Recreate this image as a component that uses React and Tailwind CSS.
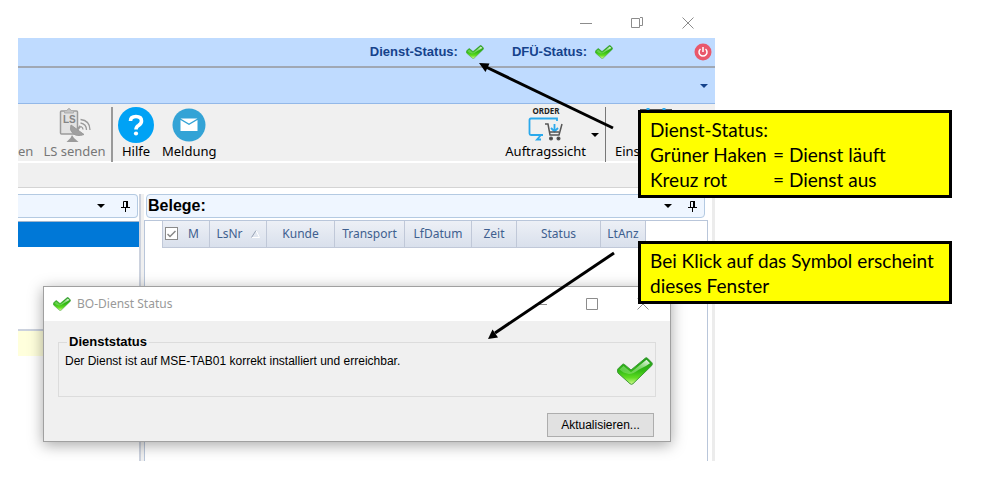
import { useId } from "react";

const columns = [
  { name: "Kunde", width: "w-[68px]" },
  { name: "Transport", width: "w-[70px]" },
  { name: "LfDatum", width: "w-[67px]" },
  { name: "Zeit", width: "w-[45px]" },
  { name: "Status", width: "w-[84px]" },
  { name: "LtAnz", width: "w-[45px]" },
];

function CheckIcon({ className }) {
  const id = useId();
  return (
    <svg viewBox="0 0 36 28" className={className} aria-hidden="true">
      <defs>
        <linearGradient id={id + "a"} x1="0" y1="0" x2="0" y2="1">
          <stop offset="0" stopColor="#1f9a1a" />
          <stop offset="0.5" stopColor="#33bb14" />
          <stop offset="0.75" stopColor="#5fdc22" />
          <stop offset="1" stopColor="#d4fa90" />
        </linearGradient>
        <linearGradient id={id + "b"} x1="1" y1="0" x2="0.3" y2="0.9">
          <stop offset="0" stopColor="#ffffff" stopOpacity="0.95" />
          <stop offset="0.5" stopColor="#e4ffd8" stopOpacity="0.5" />
          <stop offset="1" stopColor="#d0ffc0" stopOpacity="0.3" />
        </linearGradient>
      </defs>
      <path
        d="M.8 12 5.500 7.300Q6.500 6.600 7.500 7.500L14 13 28.500 1Q29.500 .3 30.500 1.200L35 5.800Q35.700 7 34.800 8.500L16 26.700Q14.500 28 13 26.700L1 16Q0 14 .8 12Z"
        fill={"url(#" + id + "a)"}
        stroke="#3f9a38"
        strokeWidth="1"
      />
      <path
        d="M2.500 12.500 6.500 9 14 15.300 29.500 2.800 33 6.200Q29 9.500 22 12.500 16 17 12 17 6 16 2.500 12.500Z"
        fill={"url(#" + id + "b)"}
      />
    </svg>
  );
}

function WindowButtons({ restore }) {
  return (
    <div className="flex pr-[2px] text-[#8c8c8c]">
      <button type="button" aria-label="Minimieren" className="flex h-8 w-[51px] items-center justify-center">
        <svg width="12" height="12" viewBox="0 0 12 12" stroke="currentColor">
          <path d="M0 6.500H12" />
        </svg>
      </button>
      <button type="button" aria-label="Maximieren" className="flex h-8 w-[51px] items-center justify-center">
        <svg width="12" height="12" viewBox="0 0 12 12" fill="none" stroke="currentColor">
          {restore ? <path d="M.5 1.500H8.500V10.500H.5ZM9 .5H11.500V8.500H9" /> : <path d="M.5 .5H11.500V11.500H.5Z" />}
        </svg>
      </button>
      <button type="button" aria-label="Schließen" className="flex h-8 w-[51px] items-center justify-center">
        <svg width="12" height="12" viewBox="0 0 12 12" stroke="currentColor">
          <path d="M.5 .5 11.500 11.500M11.500 .5 .5 11.500" />
        </svg>
      </button>
    </div>
  );
}

function Caret() {
  return (
    <svg width="8" height="4" viewBox="0 0 8 4" aria-hidden="true">
      <path d="M0 0H8L4 4Z" fill="currentColor" />
    </svg>
  );
}

function PanelTools() {
  return (
    <div className="flex items-center gap-4">
      <button type="button" aria-label="Menü">
        <Caret />
      </button>
      <button type="button" aria-label="Anheften">
        <svg width="9" height="11" viewBox="0 0 9 11" fill="none" stroke="currentColor" aria-hidden="true">
          <path d="M2.500 6V.5H6.500V6M0 6.500H9M4.500 7V11" />
          <path d="M6 0V6" strokeWidth="2" />
        </svg>
      </button>
    </div>
  );
}

function ToolButton({ label, children }) {
  return (
    <button type="button" className="flex shrink-0 flex-col items-center">
      <span className="flex h-9 items-center justify-center">{children}</span>
      <span className="text-[13px] leading-4">{label}</span>
    </button>
  );
}

function SendIcon() {
  return (
    <svg width="32" height="36" viewBox="0 0 32 36" fill="none" stroke="#9b9b9b" aria-hidden="true">
      <rect x="1.500" y="4" width="17" height="23" rx="1" fill="#e2e2e2" strokeWidth="1.500" />
      <path d="M5.500 6V3.500H8Q10 -.5 12 3.500H14.500V6Z" fill="#c4c4c4" stroke="#adadad" />
      <text x="4" y="16" fontSize="10" fontWeight="700" fill="#858585" stroke="none" fontFamily="Liberation Sans">
        LS
      </text>
      <path d="M12 18Q10 23 14 26.500 18 30 25 27.500Z" fill="#a0a0a0" />
      <path d="M18 23 21.500 19" strokeWidth="2" />
      <path d="M7.500 35 11.500 31 13 28 15 31 19.500 35Z" fill="#9b9b9b" stroke="none" />
      <path d="M22 19.500Q24 20.500 24 22.500M21.500 16Q27.500 17 27.500 23M21.500 12.500Q31 13.500 31 23" strokeWidth="1.300" />
    </svg>
  );
}

function MailIcon() {
  return (
    <svg width="34" height="34" viewBox="0 0 34 34" aria-hidden="true">
      <circle cx="17" cy="17" r="16.500" fill="#33a3d6" />
      <path d="M8.500 12 17 17 25.500 12V23H8.500Z" fill="#fff" />
      <path d="M8.500 10.500H25.500L17 15.500Z" fill="#fff" />
    </svg>
  );
}

function OrderIcon() {
  return (
    <svg width="36" height="36" viewBox="0 0 36 36" fill="none" overflow="visible" aria-hidden="true">
      <text x="18" y="7" fontSize="8" fontWeight="700" fill="#222" textAnchor="middle" fontFamily="Noto Sans">
        ORDER
      </text>
      <g stroke="#2ba9ec" strokeWidth="1.800">
        <path d="M29 14V11.500H3Q1.500 11.500 1.500 13V26.500Q1.500 28 3 28H15M13 28 9 32.500H13" />
        <path d="M26.500 17V24M23 21 26.500 24.500 30 21" />
      </g>
      <g stroke="#555" strokeWidth="1.500">
        <path d="M17 17H20L22 28H31L34 17M21 25H31" />
        <circle cx="23" cy="31.500" r="1.300" fill="#333" />
        <circle cx="30.500" cy="31.500" r="1.300" fill="#333" />
      </g>
    </svg>
  );
}

function SettingsIcon() {
  return (
    <svg width="34" height="36" viewBox="0 0 34 36" fill="none" strokeWidth="2" aria-hidden="true">
      <path d="M2 3H32V30H2Z" stroke="#555" />
      <path d="M9 1V6M25 1V6" stroke="#2ba9ec" strokeWidth="3" />
    </svg>
  );
}

function StatusDialog() {
  return (
    <section
      role="dialog"
      aria-label="BO-Dienst Status"
      className="absolute top-[286px] left-[25px] w-[628px] border border-[#a0a0a0] bg-[#f0f0f0] shadow-[0_3px_14px_rgba(0,0,0,0.35)]"
    >
      <header className="flex h-[34px] items-center bg-white pl-[9px]">
        <CheckIcon className="h-[14px] w-[18px]" />
        <h2 className="ml-1.5 flex-1 font-['Noto_Sans',sans-serif] text-xs text-[#999]">BO-Dienst Status</h2>
        <WindowButtons />
      </header>
      <div className="px-[14px] pt-[13px] pb-1">
        <fieldset className="flex h-[63px] justify-between border border-[#dcdcdc] pr-[2px] pl-1.5">
          <legend className="ml-0.5 px-0.5 text-[13px] leading-4 font-bold">Dienststatus</legend>
          <p className="text-xs leading-[22px]">Der Dienst ist auf MSE-TAB01 korrekt installiert und erreichbar.</p>
          <CheckIcon className="mt-[7px] h-7 w-9" />
        </fieldset>
        <div className="mt-4 flex justify-end pr-[2px]">
          <button type="button" className="h-6 w-[107px] border border-[#adadad] bg-[#e1e1e1] text-xs">
            Aktualisieren...
          </button>
        </div>
      </div>
    </section>
  );
}

export default function App() {
  return (
    <div className="relative bg-white pr-[282px] pl-[18px] font-['Liberation_Sans',Arial,sans-serif] text-black">
      <main className="relative">
        <div className="flex h-[39px] items-end justify-end">
          <WindowButtons restore />
        </div>

        <div className="-mt-px flex h-7 items-center justify-end bg-[#bfdbff] pr-[3px] text-[13px] font-bold text-[#15428b]">
          <span>Dienst-Status:</span>
          <CheckIcon className="ml-2 h-[14px] w-[18px]" />
          <span className="ml-7">DFÜ-Status:</span>
          <CheckIcon className="mr-[81px] ml-2 h-[14px] w-[18px]" />
          <button type="button" aria-label="Beenden">
            <svg width="18" height="18" viewBox="0 0 18 18" fill="none" stroke="#fff" strokeWidth="1.500">
              <circle cx="9" cy="9" r="8.500" fill="#e9586b" stroke="none" />
              <path d="M6.500 6A4 4 0 1 0 11.500 6M9 4V9" />
            </svg>
          </button>
        </div>
        <div className="flex h-[38px] items-center justify-end border-t-2 border-b border-t-[#a0a8b4] border-b-[#93b8e8] bg-[#bfdbff] pr-[7px] text-[#15428b]">
          <Caret />
        </div>

        <div className="flex h-[59px] border-b-2 border-white bg-[#f0f0f0] pt-[3px] font-['Noto_Sans',sans-serif]">
          <div className="flex w-[93px] shrink-0 gap-2.5 text-[#777]">
            <ToolButton label="en" />
            <ToolButton label="LS senden">
              <SendIcon />
            </ToolButton>
          </div>
          <div className="flex h-[55px] gap-2 border-l-2 border-[#999] pl-[5px]">
            <ToolButton label="Hilfe">
              <svg width="36" height="36" viewBox="0 0 36 36" aria-hidden="true">
                <circle cx="18" cy="18" r="18" fill="#00a2f5" />
                <path
                  d="M12.500 14Q12.500 9.500 18 9.500T23.500 14Q23.500 16.500 20.500 18.500 18 20 18 22.500"
                  fill="none"
                  stroke="#fff"
                  strokeWidth="3.600"
                />
                <circle cx="18" cy="26.500" r="2.100" fill="#fff" />
              </svg>
            </ToolButton>
            <ToolButton label="Meldung">
              <MailIcon />
            </ToolButton>
          </div>
          <div className="ml-auto flex h-[55px]">
            <ToolButton label="Auftragssicht">
              <OrderIcon />
            </ToolButton>
            <button type="button" aria-label="Weitere Sichten" className="flex w-[19px] items-center justify-center">
              <Caret />
            </button>
            <div className="border-l border-[#777] pr-[17px] pl-[9px]">
              <ToolButton label="Einstellungen">
                <SettingsIcon />
              </ToolButton>
            </div>
          </div>
        </div>
        <div className="h-[25px] border-b border-[#d4d4d4] bg-[#f0f0f0]" />

        <div className="mt-1.5 flex h-[267px]">
          <div className="w-[123px] shrink-0 border-r-2 border-[#ccd2de]">
            <div className="mr-px flex h-6 items-center justify-end rounded-r-sm border border-l-0 border-[#b4cae2] bg-[#eff6ff] pr-[7px]">
              <PanelTools />
            </div>
            <div className="mt-[3px] h-[26px] border-t border-[#9fb4cc] bg-[#0078d7]" />
            <div className="mt-[82px] h-[27px] border-t-2 border-[#ccd2de] bg-[#ffffdc]" />
          </div>
          <div className="w-[3px] shrink-0 bg-[#f0f0f0]" />
          <div className="flex min-w-0 flex-1 flex-col">
            <div className="mr-[7px] ml-[2px] flex h-6 items-center justify-between rounded-sm border border-[#b4cae2] bg-[#eff6ff] pr-[7px] pl-px">
              <h1 className="text-base leading-5 font-bold">Belege:</h1>
              <PanelTools />
            </div>
            <div className="mt-[2px] mr-1 flex-1 border-x border-t border-[#b9c6da] pl-[17px]">
              <table className="w-[483px] table-fixed border-collapse font-['Noto_Sans',sans-serif] text-xs text-[#3f5f8f]">
                <thead>
                  <tr className="h-[26px] bg-linear-to-b from-[#edf0f6] to-[#d9e0ec]">
                    <th className="w-[47px] border-x border-b border-[#c0c8d8] p-0 font-normal">
                      <label className="relative flex items-center gap-2 pl-[2px]">
                        <input
                          type="checkbox"
                          defaultChecked
                          className="h-[13px] w-[13px] appearance-none border border-[#8a8a8a] bg-white"
                        />
                        <svg width="9" height="8" viewBox="0 0 9 8" className="absolute left-1" fill="none" stroke="#888">
                          <path d="M.5 4 3 6.500 8.500 1" strokeWidth="1.500" />
                        </svg>
                        <span className="pl-0.5">M</span>
                      </label>
                    </th>
                    <th className="w-[57px] border-x border-b border-[#c0c8d8] p-0 font-normal">
                      <span className="flex items-center justify-center gap-2">
                        LsNr
                        <svg width="9" height="8" viewBox="0 0 9 8" fill="none">
                          <path d="M.5 7.500H8.500L5 .5" stroke="#fff" />
                          <path d="M.5 7.500 5 .5" stroke="#98a2b4" />
                        </svg>
                      </span>
                    </th>
                    {columns.map((col) => (
                      <th key={col.name} className={"border-x border-b border-[#c0c8d8] p-0 font-normal " + col.width}>
                        {col.name}
                      </th>
                    ))}
                  </tr>
                </thead>
              </table>
            </div>
          </div>
          <div className="w-[3px] shrink-0 bg-[#ececec]" />
        </div>

        <StatusDialog />
      </main>

      {/* callouts and their arrows */}
      <svg width="160" height="290" viewBox="0 0 160 290" className="absolute top-[60px] left-[470px]" aria-hidden="true">
        <g stroke="#000" strokeWidth="3">
          <path d="M143 68 16 7" />
          <path d="M144 193 25 273" />
        </g>
        <path d="M9 3 19.500 3.500 15.500 12Z" />
        <path d="M18 279 22.500 269.500 28 277.500Z" />
      </svg>
      <aside className="absolute top-[110px] left-[638px] w-[314px] border-3 border-black bg-[#ffff00] px-[9px] pt-1 pb-[3px] font-['Lato',sans-serif] text-[19px] leading-[25px]">
        <p>Dienst-Status:</p>
        <dl className="grid grid-cols-[123px_1fr]">
          <dt>Grüner Haken</dt>
          <dd>= Dienst läuft</dd>
          <dt>Kreuz rot</dt>
          <dd>= Dienst aus</dd>
        </dl>
      </aside>
      <aside className="absolute top-[241px] left-[638px] w-[314px] border-3 border-black bg-[#ffff00] px-[9px] pt-1 pb-[3px] font-['Lato',sans-serif] text-[19px] leading-[25px]">
        <p>Bei Klick auf das Symbol erscheint dieses Fenster</p>
      </aside>
    </div>
  );
}
